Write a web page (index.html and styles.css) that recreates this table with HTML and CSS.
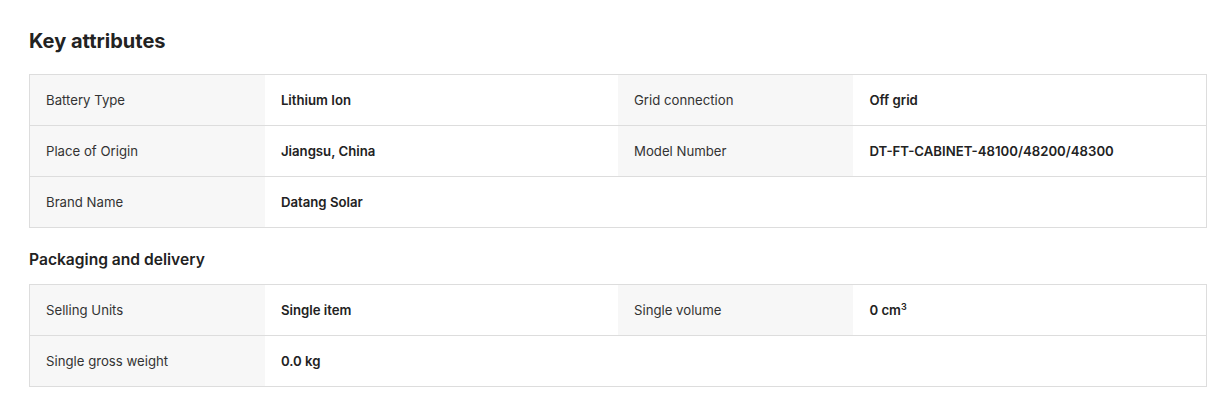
FILE: index.html
```html
<!DOCTYPE html>
<html lang="en">
<head>
  <meta charset="UTF-8" />
  <title>Key attributes</title>
  <link rel="stylesheet" href="styles.css">
</head>
<body>
  <div class="container">
    <h2 class="title">Key attributes</h2>
    <table class="attr-table">
      <tr>
        <td class="attr-name">Battery Type</td>
        <td class="attr-value">Lithium Ion</td>
        <td class="attr-name">Grid connection</td>
        <td class="attr-value">Off grid</td>
      </tr>
      <tr>
        <td class="attr-name">Place of Origin</td>
        <td class="attr-value">Jiangsu, China</td>
        <td class="attr-name">Model Number</td>
        <td class="attr-value">DT-FT-CABINET-48100/48200/48300</td>
      </tr>
      <tr>
        <td class="attr-name">Brand Name</td>
        <td class="attr-value">Datang Solar</td>
        <td></td>
        <td></td>
      </tr>
    </table>

    <h3 class="subtitle">Packaging and delivery</h3>
    <table class="attr-table">
      <tr>
        <td class="attr-name">Selling Units</td>
        <td class="attr-value">Single item</td>
        <td class="attr-name">Single volume</td>
        <td class="attr-value">0 cm<sup>3</sup></td>
      </tr>
      <tr>
        <td class="attr-name">Single gross weight</td>
        <td class="attr-value">0.0 kg</td>
        <td></td>
        <td></td>
      </tr>
    </table>
  </div>
</body>
</html>
```

FILE: styles.css
```css
body {
  font-family: Inter, "Noto Sans", sans-serif;
  background: #fff;
  color: #222;
  margin: 0;
  padding: 0;
}

.container {
  width: 1178px;
  margin-left: 29px;
}

.title {
  font-size: 20px;
  line-height: 28px;
  font-weight: 700;
  margin: 0;
  padding-top: 27px;
  margin-bottom: 19px;
}

.subtitle {
  font-size: 15.6px;
  line-height: 24px;
  font-weight: 600;
  margin: 20px 0 12px;
}

.attr-table {
  width: 100%;
  border-collapse: collapse;
  table-layout: fixed;
  font-size: 13.2px;
}

.attr-table td {
  border-top: 1px solid #ddd;
  border-bottom: 1px solid #ddd;
  height: 51px;
  padding: 0 16px;
  box-sizing: border-box;
}

.attr-table td:first-child {
  border-left: 1px solid #ddd;
}

.attr-table td:last-child {
  border-right: 1px solid #ddd;
}

.attr-name {
  width: 20%;
  background: #f7f7f7;
  color: #333;
}

.attr-value {
  width: 30%;
  font-weight: 600;
  color: #222;
}

.attr-value sup {
  font-size: 9px;
  line-height: 0;
}
```
